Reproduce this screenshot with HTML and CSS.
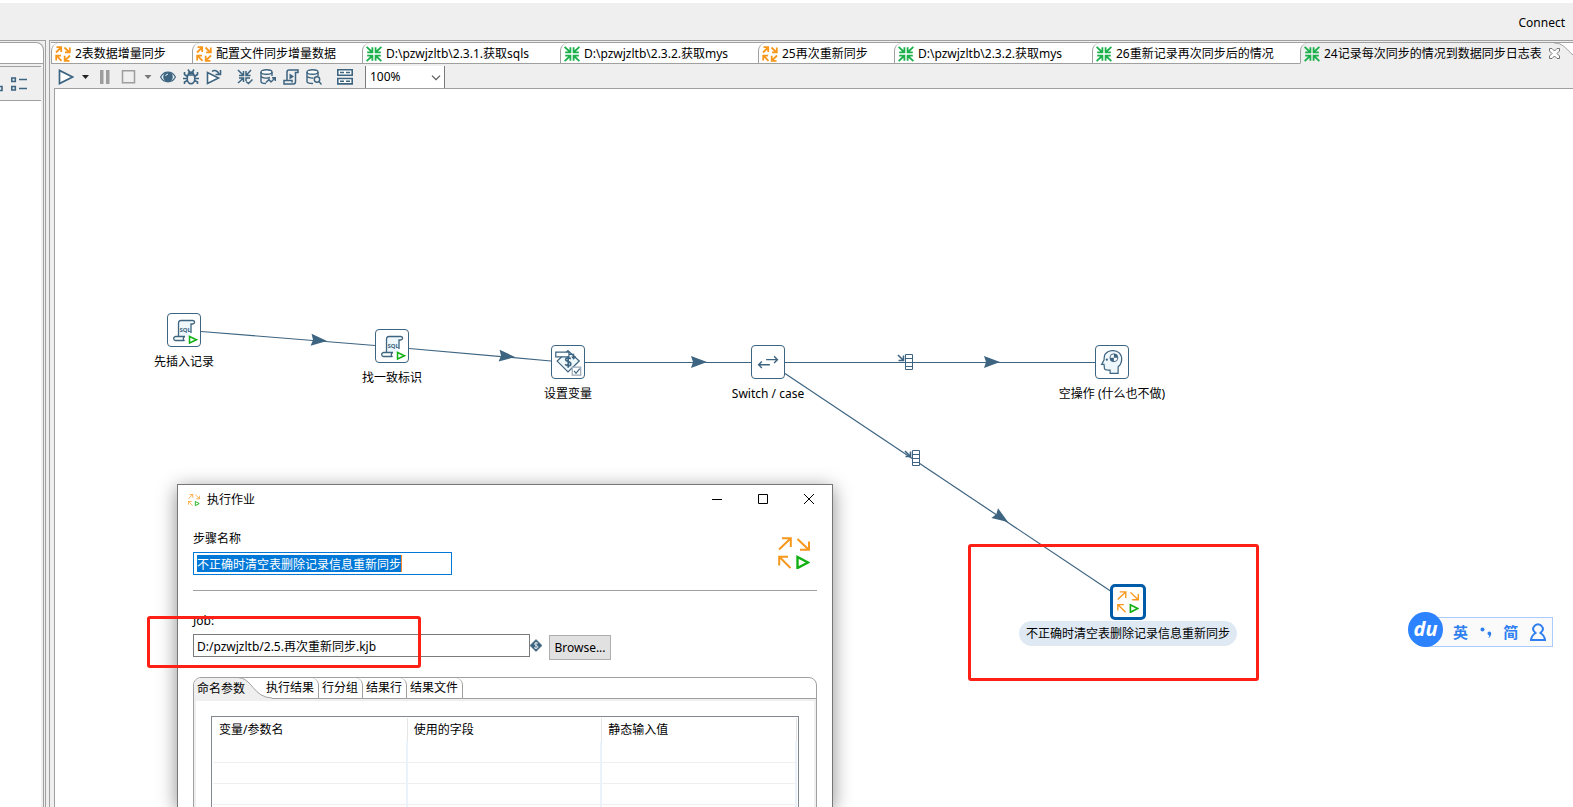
FILE: index.html
```html
<!DOCTYPE html>
<html lang="zh-CN">
<head>
<meta charset="utf-8">
<title>Spoon</title>
<link rel="stylesheet" href="styles.css">
</head>
<body>
<svg class="defs" aria-hidden="true">
  <symbol id="job" viewBox="0 0 16 16">
    <g fill="none" stroke="#f7981d" stroke-width="1.8">
      <path d="M1 6.5 5.5 2M1.5 1.2H6.2V6"/><path d="M9.5 1.5 14 6M14.8 1.5V6.4H10"/>
      <path d="M6.5 14.8 2 10.2M1.2 14.5V9.6H6"/><path d="M15 9.5 10.3 14.2M9.7 9.8V14.8H14.5"/>
    </g>
  </symbol>
  <symbol id="trans" viewBox="0 0 16 16">
    <g fill="none" stroke="#1bb04b" stroke-width="1.8">
      <path d="M.6.8 6 6M6.4 1.2V6.4H1.2"/><path d="M15.4.8 10 6M9.6 1.2V6.4H14.8"/>
      <path d="M.6 15.2 6 10M6.4 14.8V9.6H1.2"/><path d="M15.4 15.2 10 10M9.6 14.8V9.6H14.8"/>
    </g>
  </symbol>
  <symbol id="jobexec" viewBox="0 0 32 32">
    <g fill="none" stroke="#f7981d" stroke-width="2">
      <path d="M1 12.5 12.5 1.5M4 1.2H12.8V10"/><path d="M19.5 2 30.5 12.5M31 4.5V12.8H22"/>
      <path d="M12.5 31 1.5 20M1.2 28.5V19.8H10"/>
    </g>
    <path d="M19.5 20V31L30 25.5Z" fill="none" stroke="#12b012" stroke-width="2.4"/>
  </symbol>
</svg>

<div class="app">
  <header class="topbar"><a class="connect" href="#">Connect</a></header>
  <div class="workspace">
    <aside class="side">
      <div class="side-head"></div>
      <div class="side-tools">
        <svg width="28" height="16" viewBox="0 0 28 16" fill="none" stroke="#3d6480" stroke-width="1.600"><path d="M0 10.500H2V14.500H0M11.800 2h3.500v3.500h-3.500zM11.800 10.500h3.500v3.500h-3.500zM19 3.500h8M19 12.500h8"/></svg>
      </div>
    </aside>
    <main class="editor">
      <nav class="tabs">
        <a class="tab" href="#"><svg class="ic"><use href="#job"/></svg>2表数据增量同步</a>
        <a class="tab" href="#"><svg class="ic"><use href="#job"/></svg>配置文件同步增量数据</a>
        <a class="tab" href="#"><svg class="ic"><use href="#trans"/></svg>D:\pzwjzltb\2.3.1.获取sqls</a>
        <a class="tab" href="#"><svg class="ic"><use href="#trans"/></svg>D:\pzwjzltb\2.3.2.获取mys</a>
        <a class="tab" href="#"><svg class="ic"><use href="#job"/></svg>25再次重新同步</a>
        <a class="tab" href="#"><svg class="ic"><use href="#trans"/></svg>D:\pzwjzltb\2.3.2.获取mys</a>
        <a class="tab" href="#"><svg class="ic"><use href="#trans"/></svg>26重新记录再次同步后的情况</a>
        <a class="tab current" href="#"><svg class="ic"><use href="#trans"/></svg>24记录每次同步的情况到数据同步日志表
          <svg class="close" width="11" height="11" viewBox="0 0 11 11"><path d="M.5.500H3L5.500 3 8 .500h2.500V3L8 5.500 10.500 8v2.500H8L5.500 8 3 10.500H.500V8L3 5.500.500 3Z" fill="#fff" stroke="#666" stroke-width=".9"/></svg>
          <svg class="tab-curve" width="19" height="21" viewBox="0 0 19 21"><path d="M2 0C9 0 11 6 19 12V0Z" fill="#fff"/><path d="M0 0C9 0 11 5 19 12" fill="none" stroke="#a0a0a0"/></svg>
        </a>
      </nav>
      <div class="toolbar">
        <button aria-label="Run"><svg class="ic" viewBox="0 0 16 16"><path d="M1.500 1.500V14.500L14.500 8Z" fill="#fff" stroke="#3d6480" stroke-width="1.700"/></svg></button>
        <button class="drop" aria-label="Run options"><svg width="9" height="16" viewBox="0 0 9 16"><path d="M1 6H8L4.500 10Z" fill="#222"/></svg></button>
        <button aria-label="Pause"><svg class="ic" viewBox="0 0 16 16"><path d="M3 1h3.500v14H3zM9 1h3.500v14H9z" fill="#9d9d9d"/></svg></button>
        <button aria-label="Stop"><svg class="ic" viewBox="0 0 16 16"><path d="M2.500 1.800h12v12h-12z" fill="none" stroke="#9d9d9d" stroke-width="1.500"/></svg></button>
        <button class="drop" aria-label="Stop options"><svg width="10" height="16" viewBox="0 0 10 16"><path d="M1.500 6H8.500L5 10Z" fill="#777"/></svg></button>
        <button aria-label="Preview"><svg class="ic" viewBox="0 0 16 16"><path d="M.6 8C4 1.500 12 1.500 15.400 8 12 14.500 4 14.500.6 8Z" fill="#eef4f8" stroke="#3d6480" stroke-width="1.200"/><circle cx="8" cy="8" r="4.800" fill="#3d6480"/><path d="M5.500 7C6 5.800 6.800 5.300 8 5.200" stroke="#fff" fill="none"/></svg></button>
        <button aria-label="Debug"><svg class="ic" viewBox="0 0 16 16" fill="none" stroke="#3d6480" stroke-width="1.600"><ellipse cx="8" cy="9.500" rx="3.800" ry="5.200"/><path d="M4.500 6H11.500M5.500 5C5.500 2.500 10.500 2.500 10.500 5M5 .500 6.500 3M11 .500 9.500 3M1.500 3V5.500L4.500 7.500M14.500 3V5.500L11.500 7.500M0 9.500H4M12 9.500H16M1.500 15V13L4.500 11.500M14.500 15V13L11.500 11.500"/></svg></button>
        <button aria-label="Replay"><svg class="ic" viewBox="0 0 16 16" fill="none" stroke="#3d6480" stroke-width="1.600"><path d="M1.500 3.500V14.500L12.500 9Z" fill="#fff"/><path d="M6 2.500C8.500.500 11.500 1.500 13 5M9.500 5.500H14.500V1"/></svg></button>
        <button class="group" aria-label="Verify"><svg class="ic" viewBox="0 0 16 16" fill="none" stroke="#3d6480" stroke-width="1.500"><path d="M1 1 6 6M6.500 2V6.500H2M14 1 9.500 6M9 2V6.500H13.500M1 14 6 9.500M6.500 13V9H2M9 12V9H13M9 12.500 11.500 14.500 15.500 10.500"/></svg></button>
        <button aria-label="Impact"><svg class="ic" viewBox="0 0 16 16" fill="none" stroke="#3d6480" stroke-width="1.400"><ellipse cx="6.500" cy="3" rx="5.500" ry="2.200" fill="#fff"/><path d="M1 3V12.500C1 14 4 14.500 6 14.500M12 3V7M1 7.500C3 9.500 8 9.500 10 8.500M6 13.500 9 10.500 11 13 15 9M12 8.700H15.300V12"/></svg></button>
        <button aria-label="SQL"><svg class="ic" viewBox="0 0 16 16" fill="none" stroke="#3d6480" stroke-width="1.500"><path d="M4 11V3C4 1.500 5 1 6 1H15V3.500H12.500V12.500C12.500 14 12 15 10.500 15H1V11.500H9V13.500"/><path d="M6.500 4.500V10.500L11 7.500Z" fill="#3d6480" stroke="none"/></svg></button>
        <button aria-label="Explore database"><svg class="ic" viewBox="0 0 16 16" fill="none" stroke="#3d6480" stroke-width="1.400"><ellipse cx="6.500" cy="3" rx="5.500" ry="2.200" fill="#fff"/><path d="M1 3V12.500C1 14 4 14.500 7 14.500M12 3V7M1 7.500C3 9 6 9.200 7.500 9"/><circle cx="11" cy="10.500" r="2.700"/><path d="M13 12.500 15.500 15.500"/></svg></button>
        <button class="group" aria-label="Show results"><svg class="ic" viewBox="0 0 16 16" fill="#fff" stroke="#3d6480" stroke-width="1.600"><path d="M.8.800h14.400v5.400H.800zM.800 9.500h14.400v5.400H.800z"/><path d="M3 3.500h4M9 3.500h4M3 12.200h4M9 12.200h4"/></svg></button>
        <div class="zoom">
          <select aria-label="Zoom"><option>100%</option></select>
          <svg class="chev" width="10" height="6" viewBox="0 0 10 6"><path d="M1 .700 5 4.700 9 .700" fill="none" stroke="#555" stroke-width="1.200"/></svg>
        </div>
      </div>
      <section class="canvas">
        <svg class="hops" width="1518" height="718" viewBox="55 89 1518 718">
          <g stroke="#3d6480" stroke-width="1.200" fill="none">
            <path d="M201 331.500 375 345.500M409 348.500 551 361"/>
            <path d="M585 362.500H751M785 362.500H1095"/>
            <path d="M785 373.500 1112 592"/>
          </g>
          <g fill="#3d6480">
            <path transform="translate(327 341) rotate(4.600)" d="M0 0-16-6-14 0-16 6Z"/>
            <path transform="translate(515 357) rotate(5)" d="M0 0-16-6-14 0-16 6Z"/>
            <path transform="translate(707 362)" d="M0 0-16-6-14 0-16 6Z"/>
            <path transform="translate(1000 362)" d="M0 0-16-6-14 0-16 6Z"/>
            <path transform="translate(1008 522) rotate(33.700)" d="M0 0-16-6-14 0-16 6Z"/>
          </g>
          <g id="copy" fill="#fff" stroke="#3d6480">
            <path d="M905.500 354.500h7v15h-7zM905.500 358.500h7M905.500 362.500h7M905.500 366.500h7"/><path d="M898 355 903 360M903.500 355.500V360.500H898.500" fill="none" stroke-width="1.600"/>
          </g>
          <use href="#copy" x="7" y="96"/>
        </svg>
        <div class="node n1"><svg class="box" viewBox="0 0 32 32"><g id="sql">
          <path d="M14 6.500H24C22 7.500 23 10 23 12V23H10V10Z" fill="#eef7fb"/>
          <path d="M17 22.500H7.500C5 23 5 26 7.500 26.500H16.500C14.500 25.500 15 23 17 22.500M10.500 22V9.500C10.500 7.500 11.500 6.500 13 6.500H25M25 6.500C27.500 7 27 10 24.500 10H23V19" fill="none" stroke="#3d6480" stroke-width="1.300"/>
          <text x="11.500" y="18" font-size="6" font-weight="bold" fill="#3d6480">SQL</text>
          <path d="M21.500 22.500V29L28.500 25.800Z" fill="#fff" stroke="#12b012" stroke-width="1.500"/>
        </g></svg><span>先插入记录</span></div>
        <div class="node n2"><svg class="box" viewBox="0 0 32 32"><use href="#sql"/></svg><span>找一致标识</span></div>
        <div class="node n3"><svg class="box" viewBox="0 0 34 34" fill="none" stroke="#3d6480" stroke-width="1.300"><path d="M17 5 29 16 17 27.500 5.500 16Z" fill="#eef7fb"/><path d="M4 6.500h14v5H4z" fill="#fff"/><path d="M18 9H23V13M21 11 23 13.500 25 11"/><path d="M20 13.500C18 12 14.500 12.500 14.500 14.500 14.500 17 20 16 20 19 20 21.500 15.500 21.500 14 19.500M17.200 11V23" stroke-width="1.800"/><path d="M21.500 22.500h9v8.500h-9z" fill="#fff" stroke="#9aa7b8"/><path d="M23.500 26.500 25.500 29 29.500 24"/></svg><span>设置变量</span></div>
        <div class="node n4"><svg class="box" viewBox="0 0 34 34" fill="none" stroke="#3d6480" stroke-width="1.500"><path d="M15 14.500H27M23.500 11 27 14.500 23.500 18M19 20H7M10.500 16.500 7 20 10.500 23.500"/></svg><span>Switch / case</span></div>
        <div class="node n5"><svg class="box" viewBox="0 0 34 34"><path d="M23.500 29V22C28 19 28.500 11.500 25 7.500 21 3.500 13 4 9.500 9 8.500 11 8.800 13 8.500 15L6 19.500H8.500L9 24C9.500 26 12 25.500 15 25.500V29Z" fill="#eef7fb" stroke="#3d6480" stroke-width="1.300"/><circle cx="19" cy="12.500" r="4.200" fill="#fff" stroke="#3d6480"/><path d="M19 12.500V8.300A4.200 4.200 0 0 1 23.200 12.500ZM19 12.500V16.700A4.200 4.200 0 0 1 14.800 12.500Z" fill="#3d6480"/><circle cx="11.500" cy="14.500" r="1.200" fill="#3d6480"/></svg><span>空操作 (什么也不做)</span></div>
        <div class="node n6"><div class="selbox"><svg width="22" height="22"><use href="#jobexec"/></svg></div><span>不正确时清空表删除记录信息重新同步</span></div>
        <div class="mark mark-node"></div>
      </section>
    </main>
  </div>

  <div class="ime">
    <div class="du">du</div>
    <div class="ime-bar"><b>英</b><svg width="12" height="16" viewBox="0 0 12 16" fill="#2f7ff0"><circle cx="2.500" cy="5.500" r="2"/><path d="M8 8C10 6.500 12 8.500 11 11 10.500 12.500 9.500 13.500 8 14 9 13 9.500 12 9 11.300 7.500 11 7 9 8 8Z"/></svg><b>简</b><svg width="16" height="18" viewBox="0 0 16 18" fill="none" stroke="#2f7ff0" stroke-width="2"><path d="M5.500 10C3 8 2.500 5.500 4 3.500 6 .500 10 .500 12 3.500 13.500 5.500 13 8 10.500 10 13 11.500 14.500 13.500 15 17H1C1.500 13.500 3 11.500 5.500 10Z"/></svg></div>
  </div>

  <div class="dialog" role="dialog" aria-labelledby="dlg-title">
    <div class="titlebar">
      <svg width="12" height="12"><use href="#jobexec"/></svg>
      <h1 id="dlg-title">执行作业</h1>
      <div class="winbtns">
        <button aria-label="Minimize"><svg width="10" height="10"><path d="M0 5.500H10" stroke="#000"/></svg></button>
        <button aria-label="Maximize"><svg width="10" height="10"><path d="M.500.500h9v9h-9z" fill="none" stroke="#000"/></svg></button>
        <button aria-label="Close"><svg width="10" height="10"><path d="M0 0 10 10M10 0 0 10" stroke="#000"/></svg></button>
      </div>
    </div>
    <div class="dlg-body">
      <div class="step">
        <div class="field">
          <label for="step">步骤名称</label>
          <input id="step" class="selected" type="text" value="不正确时清空表删除记录信息重新同步">
        </div>
        <svg width="32" height="32"><use href="#jobexec"/></svg>
      </div>
      <hr>
      <label for="jobfile">Job:</label>
      <div class="jobrow">
        <input id="jobfile" type="text" value="D:/pzwjzltb/2.5.再次重新同步.kjb">
        <svg width="12" height="24" viewBox="0 0 12 24"><path d="M6 5.500 12 11.500 6 17.500 0 11.500Z" fill="#3d6480" stroke="#3d6480" stroke-width=".6"/><path d="M8 9.500C7 8.300 4.500 8.500 4.500 10 4.500 11.500 8 11.300 8 13 8 14.700 5 14.700 4 13.500M6 8V15" fill="none" stroke="#fff" stroke-width=".8"/></svg>
        <button class="browse">Browse...</button>
      </div>
      <div class="folder">
        <div class="ftabs" role="tablist">
          <button class="ftab on" role="tab">命名参数<svg class="fcurve" width="34" height="22" viewBox="0 0 34 22"><path d="M0 0C12 0 16 20 34 21V22H0Z" fill="#efefef"/><path d="M0 .500C14 .500 15 20.500 34 21" fill="none" stroke="#a0a0a0"/></svg></button>
          <button class="ftab" role="tab">执行结果</button>
          <button class="ftab" role="tab">行分组</button>
          <button class="ftab" role="tab">结果行</button>
          <button class="ftab" role="tab">结果文件</button>
        </div>
        <div class="fbody">
          <table>
            <thead><tr><th>变量/参数名</th><th>使用的字段</th><th>静态输入值</th></tr></thead>
            <tbody><tr><td></td><td></td><td></td></tr><tr><td></td><td></td><td></td></tr><tr><td></td><td></td><td></td></tr><tr><td></td><td></td><td></td></tr></tbody>
          </table>
        </div>
      </div>
    </div>
  </div>
  <div class="mark mark-job"></div>
</div>
</body>
</html>
```
FILE: styles.css
```css
* { box-sizing: border-box; }
body {
  margin: 0;
  overflow: hidden;
  font: 12px/16px "Noto Sans", "Noto Sans CJK SC", sans-serif;
  color: #000;
  background: #fff;
}
svg { display: block; flex: none; }
button { font: inherit; color: inherit; border: 0; background: none; padding: 0; }
input, select { font: inherit; color: inherit; }
a { color: inherit; text-decoration: none; }
.defs { position: absolute; width: 0; height: 0; }
.ic { width: 16px; height: 16px; }

.app { position: relative; height: 100vh; display: flex; flex-direction: column; overflow: hidden; }
.topbar {
  height: 40px;
  flex: none;
  border-top: 3px solid #fff;
  background: #efefef;
  display: flex;
  align-items: center;
  justify-content: flex-end;
  padding: 2px 8px 0 0;
}
.workspace { flex: 1; min-height: 0; display: flex; gap: 3px; background: #efefef; }

.side {
  width: 46px;
  flex: none;
  display: flex;
  flex-direction: column;
  border: solid #a0a0a0;
  border-width: 1px 1px 0 0;
  padding: 1px 1px 0 0;
  background: linear-gradient(#fff, #fff) no-repeat 0 60px / 41px 100%;
}
.side-head {
  height: 22px;
  border: solid #a0a0a0;
  border-width: 1px 1px 1px 0;
  border-top-right-radius: 8px;
  background: #fff;
}
.side-tools {
  flex: 1;
  border-right: 1px solid #a0a0a0;
  padding-top: 2px;
}
.side-tools svg { box-sizing: content-box; width: 28px; padding: 9px 13px 8px 0; border-top: 1px solid #a0a0a0; border-bottom: 1px solid #a0a0a0; }

.editor {
  flex: 1;
  min-width: 0;
  display: flex;
  flex-direction: column;
  border: solid #a0a0a0;
  border-width: 1px 0 0 1px;
  padding: 1px 0 0 1px;
}
.tabs {
  height: 22px;
  flex: none;
  display: grid;
  grid-template-columns: 141px 170px 198px 198px 136px 198px 208px 1fr;
  border-top: 1px solid #a0a0a0;
  background: #fff;
}
.tab {
  position: relative;
  display: flex;
  align-items: center;
  gap: 4px;
  padding: 1px 0 0 3px;
  white-space: nowrap;
  border: solid #a0a0a0;
  border-width: 0 0 1px 1px;
  border-top-left-radius: 8px;
}
.tab.current { background: #efefef; border-bottom-color: #efefef; }
.close { margin-left: 3px; }
.tab-curve { position: absolute; right: 0; top: 0; }

.toolbar {
  height: 24px;
  flex: none;
  display: flex;
  align-items: center;
  gap: 7px;
  padding: 2px 0 0 7px;
  background: #efefef;
}
.toolbar .group { margin-left: 8px; }
.zoom { position: relative; margin-left: 5px; width: 80px; height: 22px; }
.zoom select {
  appearance: none;
  width: 100%;
  height: 100%;
  border: solid #7a7a7a;
  border-width: 0 1px;
  border-radius: 0;
  background: #fff;
  padding: 0 4px;
}
.chev { position: absolute; right: 4px; top: 9px; }

.canvas {
  position: relative;
  flex: 1;
  margin-left: 3px;
  border: solid #a0a0a0;
  border-width: 1px 0 0 1px;
  background: #fff;
  overflow: hidden;
}
.hops { position: absolute; left: 0; top: 0; }
.node {
  position: absolute;
  width: 220px;
  display: flex;
  flex-direction: column;
  align-items: center;
  gap: 7px;
}
.box { width: 34px; height: 34px; border: 1px solid #3d6480; border-radius: 4px; background: #fff; }
.n1 { left: 19px; top: 224px; }
.n2 { left: 227px; top: 240px; }
.n3 { left: 403px; top: 256px; }
.n4 { left: 603px; top: 256px; }
.n5 { left: 947px; top: 256px; }
.n6 { left: 963px; top: 495px; gap: 1px; }
.n6 span { padding: 5px 7px 4px; border-radius: 13px; background: #dfe9f4; }
.selbox { padding: 4px; border: 3px solid #005ca8; border-radius: 5px; background: #fff; }

.mark { position: absolute; border: 3px solid #ff2015; border-radius: 3px; pointer-events: none; }
.mark-node { left: 913px; top: 455px; width: 291px; height: 137px; }
.mark-job { left: 147px; top: 616px; width: 274px; height: 52px; }

.ime { position: absolute; left: 1408px; top: 612px; display: flex; align-items: center; }
.du {
  width: 35px;
  height: 35px;
  border-radius: 50%;
  background: #2d82ff;
  color: #fff;
  font: italic 700 20px/34px "Open Sans", sans-serif;
  text-align: center;
  z-index: 1;
}
.ime-bar {
  margin: 5px 0 0 -17px;
  width: 127px;
  height: 30px;
  display: flex;
  align-items: center;
  justify-content: space-between;
  padding: 0 6px 0 26px;
  border: 1px solid #a9ccfa;
  background: #fafafa;
  color: #2f7ff0;
  font-size: 15px;
}

.dialog {
  position: absolute;
  left: 177px;
  top: 484px;
  bottom: 0;
  width: 656px;
  overflow: hidden;
  border: solid #777;
  border-width: 1px 1px 0;
  background: #fff;
  box-shadow: 0 4px 18px rgba(0, 0, 0, .45);
}
.titlebar { height: 30px; display: flex; align-items: center; gap: 7px; padding-left: 10px; }
.titlebar h1 { margin: 0; font: inherit; }
.winbtns { margin-left: auto; display: flex; }
.winbtns button { width: 46px; height: 30px; display: grid; place-items: center; padding-bottom: 2px; }
.dlg-body { padding: 16px 15px 0; }
.dlg-body label { display: block; }
.step { display: flex; justify-content: space-between; align-items: center; padding-right: 7px; }
.dlg-body input {
  display: block;
  height: 23px;
  border: 1px solid #7a7a7a;
  border-radius: 0;
  padding: 0 3px;
  outline: 0;
  background: #fff;
}
.dlg-body .selected {
  width: 259px;
  margin-top: 5px;
  border-color: #0078d7;
  color: #fff;
  background:
    linear-gradient(#0078d7, #0078d7) no-repeat 3px 2px / 204px 17px,
    linear-gradient(#ff8728, #ff8728) no-repeat 207px 2px / 1px 17px,
    #fff;
}
hr { margin: 15px 0 22px; border: 0; border-top: 1px solid #a0a0a0; }
.jobrow { display: flex; margin-top: 5px; height: 27px; }
.jobrow input { width: 337px; }
.browse { margin-left: 7px; width: 62px; height: 25px; margin-top: 1px; border: 1px solid #adadad; background: #e1e1e1; }

.folder {
  margin-top: 16px;
  border: 1px solid #a0a0a0;
  border-radius: 8px 8px 0 0;
  overflow: hidden;
}
.ftabs { display: flex; height: 21px; border-bottom: 1px solid #a0a0a0; }
.ftab {
  position: relative;
  padding: 0 4px 0 3px;
  border-right: 1px solid #a0a0a0;
  border-top-right-radius: 7px;
}
.ftab.on { z-index: 0; height: 21px; padding-right: 18px; background: linear-gradient(#efefef, #efefef) no-repeat 0 0 / 44px 100%; border: 0; border-radius: 0; }
.fcurve { position: absolute; left: 44px; top: -1px; z-index: -1; }
.fbody { height: 200px; border: 2px solid #efefef; padding: 15px 15px 0; }
table {
  width: 100%;
  table-layout: fixed;
  border-collapse: separate;
  border-spacing: 0;
  border: 1px solid #828790;
  padding: 1px 1px 0 1px;
}
th { height: 24px; padding: 0 0 0 6px; text-align: left; font-weight: normal; border-right: 1px solid #e5e5e5; }
td { height: 21px; padding: 0; border-right: 2px solid #eaf2fb; border-bottom: 1px solid #efefef; }
```
